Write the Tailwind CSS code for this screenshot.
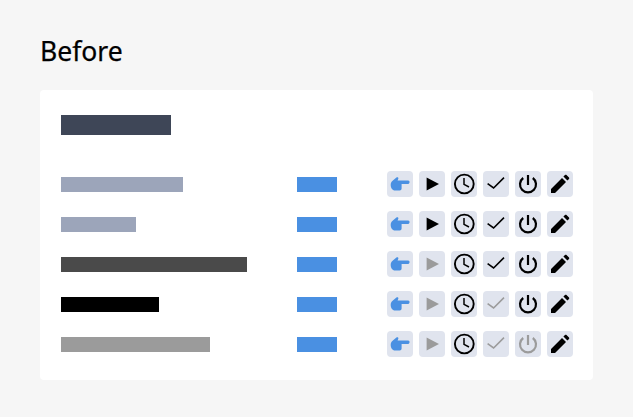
<!DOCTYPE html>
<html><head><meta charset="utf-8"><script src="https://cdn.jsdelivr.net/npm/@tailwindcss/browser@4"></script></head>
<body class="m-0 w-[633px] h-[417px] bg-[#f6f6f6] overflow-hidden font-['Noto_Sans',sans-serif]">
<div class="pt-[33px] px-10">
<h1 class="text-[26.5px] leading-[36px] h-[36px] font-normal text-black [-webkit-text-stroke:0.25px_black]">Before</h1>
<div class="mt-[21px] w-[553px] h-[290px] bg-white rounded-[4px] pt-[25px] pl-[21px]">
<div class="w-[110px] h-5 bg-[#3e4657]"></div>
<div class="mt-[36px] flex flex-col gap-[14px]">

<div class="flex items-center h-[26px]">
<div class="w-[236px] shrink-0"><div class="w-[122px] h-[15px] bg-[#9ca5ba]"></div></div>
<div class="w-[40px] shrink-0 h-[15px] bg-[#4a90e2]"></div>
<div class="ml-[50px] flex gap-[6px]">
<div class="size-[26px] rounded-[4px] bg-[#e0e4ee]"><svg viewBox="0 0 26 26" class="size-[26px]"><path fill="#4a90e2" d="M3.7 14 C3.7 12 4.4 10.8 5.6 9.8 L9.4 6.6 C10.6 5.8 11.8 6.6 11.3 7.8 L10.6 9.4 L21.2 9.6 C23 9.7 23 12.9 21.2 13 L14.6 13 L14.6 17.6 C14.6 18.8 13.8 19.5 12.6 19.5 L8 19.5 C5.5 19.5 3.7 17 3.7 14 Z"/></svg></div>
<div class="size-[26px] rounded-[4px] bg-[#e0e4ee]"><svg viewBox="0 0 26 26" class="size-[26px]"><path fill="#000" d="M7.6 6.6 L20 13 L7.6 19.4 Z"/></svg></div>
<div class="size-[26px] rounded-[4px] bg-[#e0e4ee]"><svg viewBox="0 0 26 26" class="size-[26px]" fill="none" stroke="#000"><circle cx="13.3" cy="13" r="9.4" stroke-width="1.9"/><path d="M13 7 V13.3 L18 16" stroke-width="1.5"/></svg></div>
<div class="size-[26px] rounded-[4px] bg-[#e0e4ee]"><svg viewBox="0 0 26 26" class="size-[26px]" fill="none" stroke="#000"><path d="M4.6 12.6 L10.6 17 L21 6.6" stroke-width="1.6"/></svg></div>
<div class="size-[26px] rounded-[4px] bg-[#e0e4ee]"><svg viewBox="0 0 26 26" class="size-[26px]" fill="none" stroke="#000" stroke-width="2.2"><path d="M8.2 7 A8 8 0 1 0 17.8 7"/><path d="M13 4 V14"/></svg></div>
<div class="size-[26px] rounded-[4px] bg-[#e0e4ee]"><svg viewBox="0 0 26 26" class="size-[26px]"><path fill="#000" d="M4 22 V18 L15 7 L19 11 L8 22 Z M16.4 5.6 L18 4 C18.5 3.6 19 3.6 19.5 4 L22 6.5 C22.4 7 22.4 7.5 22 8 L20.4 9.6 Z"/></svg></div>
</div></div>

<div class="flex items-center h-[26px]">
<div class="w-[236px] shrink-0"><div class="w-[75px] h-[15px] bg-[#9ca5ba]"></div></div>
<div class="w-[40px] shrink-0 h-[15px] bg-[#4a90e2]"></div>
<div class="ml-[50px] flex gap-[6px]">
<div class="size-[26px] rounded-[4px] bg-[#e0e4ee]"><svg viewBox="0 0 26 26" class="size-[26px]"><path fill="#4a90e2" d="M3.7 14 C3.7 12 4.4 10.8 5.6 9.8 L9.4 6.6 C10.6 5.8 11.8 6.6 11.3 7.8 L10.6 9.4 L21.2 9.6 C23 9.7 23 12.9 21.2 13 L14.6 13 L14.6 17.6 C14.6 18.8 13.8 19.5 12.6 19.5 L8 19.5 C5.5 19.5 3.7 17 3.7 14 Z"/></svg></div>
<div class="size-[26px] rounded-[4px] bg-[#e0e4ee]"><svg viewBox="0 0 26 26" class="size-[26px]"><path fill="#000" d="M7.6 6.6 L20 13 L7.6 19.4 Z"/></svg></div>
<div class="size-[26px] rounded-[4px] bg-[#e0e4ee]"><svg viewBox="0 0 26 26" class="size-[26px]" fill="none" stroke="#000"><circle cx="13.3" cy="13" r="9.4" stroke-width="1.9"/><path d="M13 7 V13.3 L18 16" stroke-width="1.5"/></svg></div>
<div class="size-[26px] rounded-[4px] bg-[#e0e4ee]"><svg viewBox="0 0 26 26" class="size-[26px]" fill="none" stroke="#000"><path d="M4.6 12.6 L10.6 17 L21 6.6" stroke-width="1.6"/></svg></div>
<div class="size-[26px] rounded-[4px] bg-[#e0e4ee]"><svg viewBox="0 0 26 26" class="size-[26px]" fill="none" stroke="#000" stroke-width="2.2"><path d="M8.2 7 A8 8 0 1 0 17.8 7"/><path d="M13 4 V14"/></svg></div>
<div class="size-[26px] rounded-[4px] bg-[#e0e4ee]"><svg viewBox="0 0 26 26" class="size-[26px]"><path fill="#000" d="M4 22 V18 L15 7 L19 11 L8 22 Z M16.4 5.6 L18 4 C18.5 3.6 19 3.6 19.5 4 L22 6.5 C22.4 7 22.4 7.5 22 8 L20.4 9.6 Z"/></svg></div>
</div></div>

<div class="flex items-center h-[26px]">
<div class="w-[236px] shrink-0"><div class="w-[186px] h-[15px] bg-[#4a4a4a]"></div></div>
<div class="w-[40px] shrink-0 h-[15px] bg-[#4a90e2]"></div>
<div class="ml-[50px] flex gap-[6px]">
<div class="size-[26px] rounded-[4px] bg-[#e0e4ee]"><svg viewBox="0 0 26 26" class="size-[26px]"><path fill="#4a90e2" d="M3.7 14 C3.7 12 4.4 10.8 5.6 9.8 L9.4 6.6 C10.6 5.8 11.8 6.6 11.3 7.8 L10.6 9.4 L21.2 9.6 C23 9.7 23 12.9 21.2 13 L14.6 13 L14.6 17.6 C14.6 18.8 13.8 19.5 12.6 19.5 L8 19.5 C5.5 19.5 3.7 17 3.7 14 Z"/></svg></div>
<div class="size-[26px] rounded-[4px] bg-[#e0e4ee]"><svg viewBox="0 0 26 26" class="size-[26px]"><path fill="#9b9b9b" d="M7.6 6.6 L20 13 L7.6 19.4 Z"/></svg></div>
<div class="size-[26px] rounded-[4px] bg-[#e0e4ee]"><svg viewBox="0 0 26 26" class="size-[26px]" fill="none" stroke="#000"><circle cx="13.3" cy="13" r="9.4" stroke-width="1.9"/><path d="M13 7 V13.3 L18 16" stroke-width="1.5"/></svg></div>
<div class="size-[26px] rounded-[4px] bg-[#e0e4ee]"><svg viewBox="0 0 26 26" class="size-[26px]" fill="none" stroke="#000"><path d="M4.6 12.6 L10.6 17 L21 6.6" stroke-width="1.6"/></svg></div>
<div class="size-[26px] rounded-[4px] bg-[#e0e4ee]"><svg viewBox="0 0 26 26" class="size-[26px]" fill="none" stroke="#000" stroke-width="2.2"><path d="M8.2 7 A8 8 0 1 0 17.8 7"/><path d="M13 4 V14"/></svg></div>
<div class="size-[26px] rounded-[4px] bg-[#e0e4ee]"><svg viewBox="0 0 26 26" class="size-[26px]"><path fill="#000" d="M4 22 V18 L15 7 L19 11 L8 22 Z M16.4 5.6 L18 4 C18.5 3.6 19 3.6 19.5 4 L22 6.5 C22.4 7 22.4 7.5 22 8 L20.4 9.6 Z"/></svg></div>
</div></div>

<div class="flex items-center h-[26px]">
<div class="w-[236px] shrink-0"><div class="w-[98px] h-[15px] bg-black"></div></div>
<div class="w-[40px] shrink-0 h-[15px] bg-[#4a90e2]"></div>
<div class="ml-[50px] flex gap-[6px]">
<div class="size-[26px] rounded-[4px] bg-[#e0e4ee]"><svg viewBox="0 0 26 26" class="size-[26px]"><path fill="#4a90e2" d="M3.7 14 C3.7 12 4.4 10.8 5.6 9.8 L9.4 6.6 C10.6 5.8 11.8 6.6 11.3 7.8 L10.6 9.4 L21.2 9.6 C23 9.7 23 12.9 21.2 13 L14.6 13 L14.6 17.6 C14.6 18.8 13.8 19.5 12.6 19.5 L8 19.5 C5.5 19.5 3.7 17 3.7 14 Z"/></svg></div>
<div class="size-[26px] rounded-[4px] bg-[#e0e4ee]"><svg viewBox="0 0 26 26" class="size-[26px]"><path fill="#9b9b9b" d="M7.6 6.6 L20 13 L7.6 19.4 Z"/></svg></div>
<div class="size-[26px] rounded-[4px] bg-[#e0e4ee]"><svg viewBox="0 0 26 26" class="size-[26px]" fill="none" stroke="#000"><circle cx="13.3" cy="13" r="9.4" stroke-width="1.9"/><path d="M13 7 V13.3 L18 16" stroke-width="1.5"/></svg></div>
<div class="size-[26px] rounded-[4px] bg-[#e0e4ee]"><svg viewBox="0 0 26 26" class="size-[26px]" fill="none" stroke="#9b9b9b"><path d="M4.6 12.6 L10.6 17 L21 6.6" stroke-width="1.6"/></svg></div>
<div class="size-[26px] rounded-[4px] bg-[#e0e4ee]"><svg viewBox="0 0 26 26" class="size-[26px]" fill="none" stroke="#000" stroke-width="2.2"><path d="M8.2 7 A8 8 0 1 0 17.8 7"/><path d="M13 4 V14"/></svg></div>
<div class="size-[26px] rounded-[4px] bg-[#e0e4ee]"><svg viewBox="0 0 26 26" class="size-[26px]"><path fill="#000" d="M4 22 V18 L15 7 L19 11 L8 22 Z M16.4 5.6 L18 4 C18.5 3.6 19 3.6 19.5 4 L22 6.5 C22.4 7 22.4 7.5 22 8 L20.4 9.6 Z"/></svg></div>
</div></div>

<div class="flex items-center h-[26px]">
<div class="w-[236px] shrink-0"><div class="w-[149px] h-[15px] bg-[#9b9b9b]"></div></div>
<div class="w-[40px] shrink-0 h-[15px] bg-[#4a90e2]"></div>
<div class="ml-[50px] flex gap-[6px]">
<div class="size-[26px] rounded-[4px] bg-[#e0e4ee]"><svg viewBox="0 0 26 26" class="size-[26px]"><path fill="#4a90e2" d="M3.7 14 C3.7 12 4.4 10.8 5.6 9.8 L9.4 6.6 C10.6 5.8 11.8 6.6 11.3 7.8 L10.6 9.4 L21.2 9.6 C23 9.7 23 12.9 21.2 13 L14.6 13 L14.6 17.6 C14.6 18.8 13.8 19.5 12.6 19.5 L8 19.5 C5.5 19.5 3.7 17 3.7 14 Z"/></svg></div>
<div class="size-[26px] rounded-[4px] bg-[#e0e4ee]"><svg viewBox="0 0 26 26" class="size-[26px]"><path fill="#9b9b9b" d="M7.6 6.6 L20 13 L7.6 19.4 Z"/></svg></div>
<div class="size-[26px] rounded-[4px] bg-[#e0e4ee]"><svg viewBox="0 0 26 26" class="size-[26px]" fill="none" stroke="#000"><circle cx="13.3" cy="13" r="9.4" stroke-width="1.9"/><path d="M13 7 V13.3 L18 16" stroke-width="1.5"/></svg></div>
<div class="size-[26px] rounded-[4px] bg-[#e0e4ee]"><svg viewBox="0 0 26 26" class="size-[26px]" fill="none" stroke="#9b9b9b"><path d="M4.6 12.6 L10.6 17 L21 6.6" stroke-width="1.6"/></svg></div>
<div class="size-[26px] rounded-[4px] bg-[#e0e4ee]"><svg viewBox="0 0 26 26" class="size-[26px]" fill="none" stroke="#9b9b9b" stroke-width="2.2"><path d="M8.2 7 A8 8 0 1 0 17.8 7"/><path d="M13 4 V14"/></svg></div>
<div class="size-[26px] rounded-[4px] bg-[#e0e4ee]"><svg viewBox="0 0 26 26" class="size-[26px]"><path fill="#000" d="M4 22 V18 L15 7 L19 11 L8 22 Z M16.4 5.6 L18 4 C18.5 3.6 19 3.6 19.5 4 L22 6.5 C22.4 7 22.4 7.5 22 8 L20.4 9.6 Z"/></svg></div>
</div></div>

</div></div></div>
</body></html>
